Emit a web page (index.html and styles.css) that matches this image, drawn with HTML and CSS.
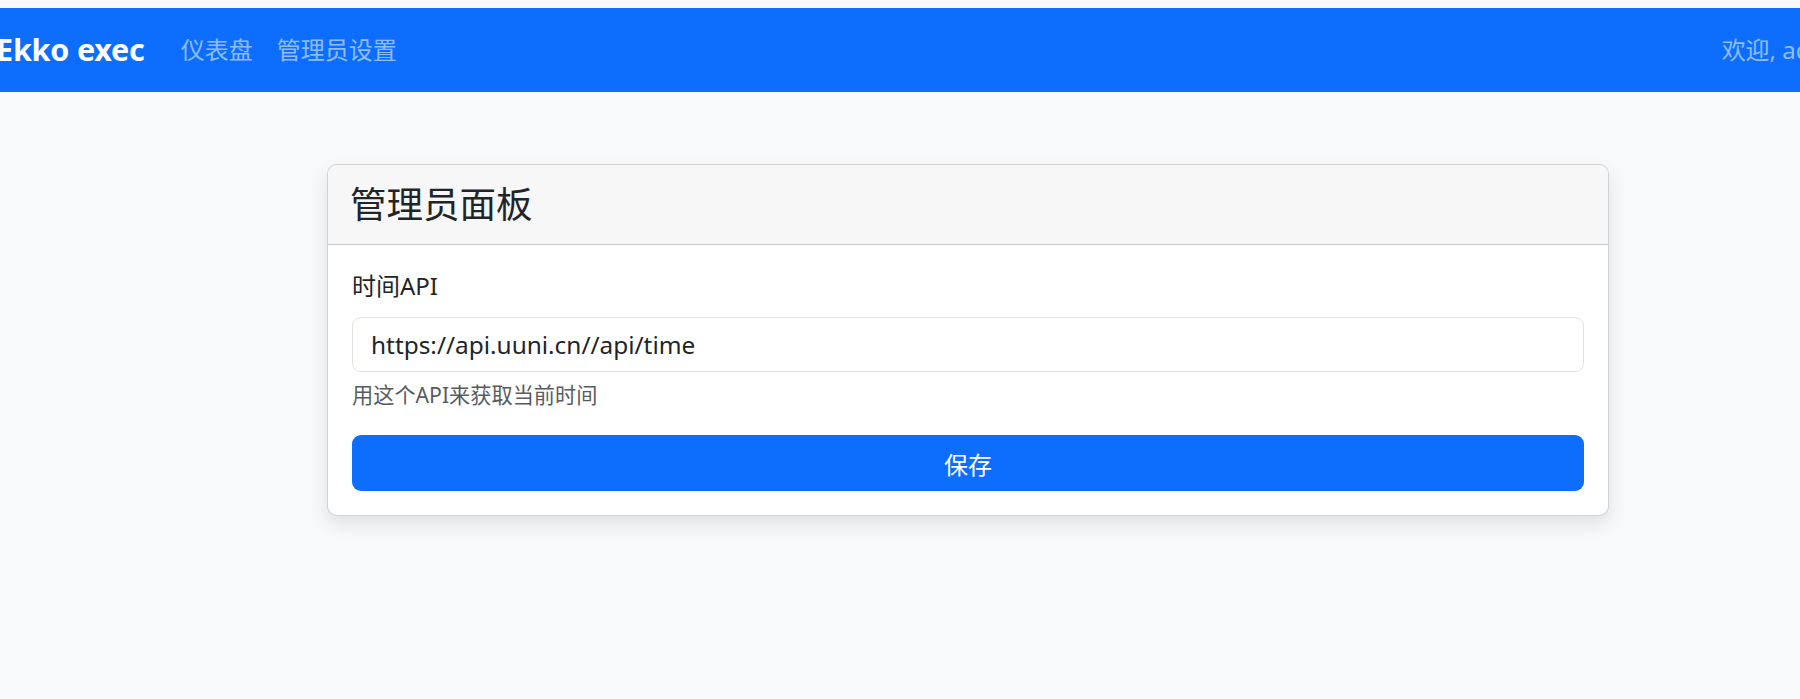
FILE: index.html
```html
<!DOCTYPE html>
<html lang="zh-CN">
<head>
<meta charset="utf-8">
<title>管理员面板 - Ekko exec</title>
<link rel="stylesheet" href="styles.css">
</head>
<body>
<nav class="navbar">
  <div class="nav-inner">
    <a class="brand" href="#">Ekko exec</a>
    <ul class="nav-links">
      <li><a class="nav-link" href="#">仪表盘</a></li>
      <li><a class="nav-link" href="#">管理员设置</a></li>
    </ul>
    <span class="welcome">欢迎, admin</span>
  </div>
</nav>
<main class="main">
  <section class="card">
    <header class="card-header">
      <h2 class="card-title">管理员面板</h2>
    </header>
    <form class="card-body">
      <label class="form-label" for="timeApi">时间API</label>
      <input class="form-control" id="timeApi" type="text" value="https://api.uuni.cn//api/time">
      <div class="form-text">用这个API来获取当前时间</div>
      <button class="btn-primary" type="button">保存</button>
    </form>
  </section>
</main>
</body>
</html>
```

FILE: styles.css
```css
* { box-sizing: border-box; }

html, body { height: 100%; }

body {
  margin: 0;
  padding-top: 8px;
  background: #f8f9fa;
  color: #212529;
  font-family: "Noto Sans", "Noto Sans CJK SC", sans-serif;
  font-size: 18.4px;
  line-height: 1.5;
  overflow: hidden;
}

.navbar {
  background: #0d6efd;
  height: 84px;
  overflow: hidden;
}

.nav-inner {
  display: flex;
  align-items: center;
  height: 100%;
  width: 1880px;
  margin-left: -4px;
  padding-right: 22px;
}

.brand {
  color: #fff;
  font-weight: 700;
  font-size: 30.5px;
  text-decoration: none;
  margin-right: 24px;
  letter-spacing: -0.2px;
}

.nav-links {
  display: flex;
  list-style: none;
  margin: 0;
  padding: 0;
}

.nav-link {
  display: block;
  padding: 0 12px;
  color: rgba(255, 255, 255, 0.55);
  font-size: 24px;
  text-decoration: none;
}

.welcome {
  margin-left: auto;
  color: rgba(255, 255, 255, 0.55);
  font-size: 24px;
}

.main {
  display: flex;
  padding: 72px 0 0 327px;
}

.card {
  width: 1282px;
  background: #fff;
  border: 1px solid rgba(0, 0, 0, 0.175);
  border-radius: 10px;
  box-shadow: 0 8px 18px rgba(0, 0, 0, 0.1);
  overflow: hidden;
}

.card-header {
  height: 80px;
  display: flex;
  align-items: center;
  padding: 0 22px;
  background: #f7f7f7;
  border-bottom: 1px solid rgba(0, 0, 0, 0.175);
}

.card-title {
  margin: 0;
  font-size: 36.5px;
  font-weight: 400;
  line-height: 1.2;
  color: #212529;
}

.card-body {
  display: flex;
  flex-direction: column;
  padding: 24px 24px 24px;
}

.form-label {
  font-size: 24px;
  line-height: 34px;
  margin-bottom: 14px;
}

.form-control {
  height: 55px;
  padding: 0 18px;
  border: 1px solid #dee2e6;
  border-radius: 9px;
  font-family: inherit;
  font-size: 24.4px;
  color: #212529;
  background: #fff;
}

.form-text {
  margin-top: 7px;
  font-size: 21.2px;
  line-height: 31px;
  color: #595c5f;
}

.btn-primary {
  margin-top: 25px;
  height: 56px;
  border: 0;
  border-radius: 9px;
  background: #0d6efd;
  color: #fff;
  font-family: inherit;
  font-size: 24px;
}
```
